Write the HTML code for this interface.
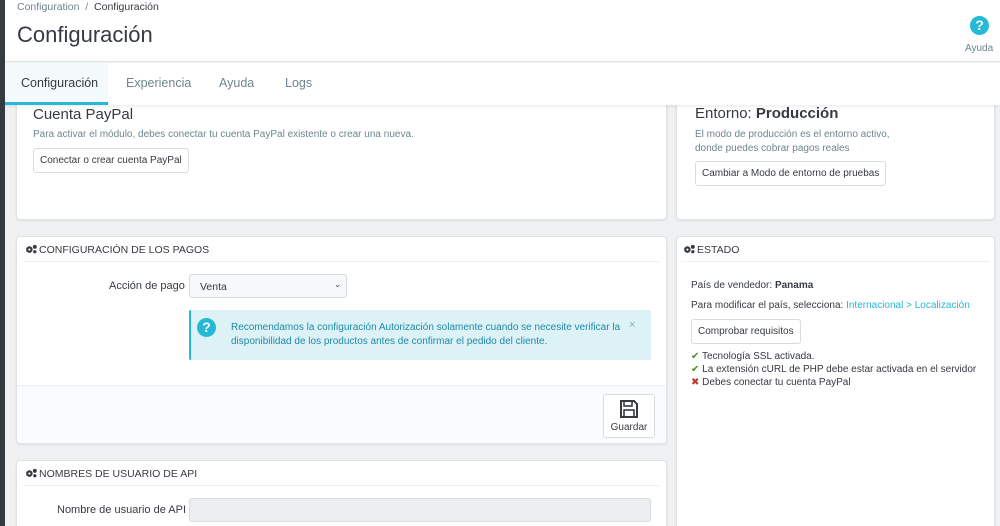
<!DOCTYPE html>
<html style="width:1000px;height:526px;overflow:hidden"><head><meta charset="utf-8"><style>
*{box-sizing:border-box;margin:0;padding:0}
body{width:1000px;height:526px;overflow:hidden;background:#eff1f2;font-family:"Liberation Sans",sans-serif;color:#363a41;position:relative;font-size:11px}
.abs{position:absolute}
.strip{left:0;top:0;width:5px;height:526px;background:#363a41;z-index:5}
.header{left:5px;top:0;width:995px;height:62px;background:#fff;border-bottom:1px solid #dfe3e6}
.tab{position:absolute;top:13px;font-size:12.5px;color:#6c868e}
.panel{background:#fff;border:1px solid #dfe3e6;border-radius:4px;box-shadow:0 1px 2px rgba(0,0,0,.08)}
.ph{position:absolute;left:6px;right:6px;top:0;height:25px;border-bottom:1px solid #eef0f1;font-family:"Liberation Sans Narrow","Liberation Sans",sans-serif;font-size:10.5px;color:#363a41;padding:7px 0 0 2px}
.btn{position:absolute;border:1px solid #d8dcdf;border-radius:3px;background:#fff;font-size:10px;color:#363a41;padding:6px 6px;white-space:nowrap}
.gear{display:inline-block;width:12px;height:10px;vertical-align:-1px;margin-right:2px}
</style></head><body>
<div class="abs strip"></div>
<div class="abs header">
 <div class="abs" style="left:12px;top:1px;font-size:10.5px;color:#6c868e">Configuration &nbsp;/&nbsp; <span style="color:#363a41">Configuración</span></div>
 <div class="abs" style="left:12px;top:22px;font-size:22px;color:#363a41">Configuración</div>
 <div class="abs" style="left:965px;top:16px;width:19px;height:19px;border-radius:50%;background:#25b9d7;color:#fff;font-weight:bold;font-size:14px;text-align:center;line-height:19px">?</div>
 <div class="abs" style="left:960px;top:43px;font-size:10px;color:#6c868e">Ayuda</div>
</div>
<!-- top left -->
<div class="abs panel" style="left:16px;top:96px;width:651px;height:124px">
 <div class="abs" style="left:16px;top:9px;font-size:15px;font-family:'Liberation Sans Narrow','Liberation Sans',sans-serif">Cuenta PayPal</div>
 <div class="abs" style="left:16px;top:32px;font-size:10px;color:#6c868e">Para activar el módulo, debes conectar tu cuenta PayPal existente o crear una nueva.</div>
 <div class="btn" style="left:16px;top:51px;height:25px">Conectar o crear cuenta PayPal</div>
</div>
<div class="abs panel" style="left:676px;top:96px;width:319px;height:124px">
 <div class="abs" style="left:18px;top:8px;font-size:15px;font-family:'Liberation Sans Narrow','Liberation Sans',sans-serif">Entorno: <b>Producción</b></div>
 <div class="abs" style="left:18px;top:31px;font-size:10px;color:#6c868e;line-height:14px">El modo de producción es el entorno activo,<br>donde puedes cobrar pagos reales</div>
 <div class="btn" style="left:18px;top:64px;height:25px">Cambiar a Modo de entorno de pruebas</div>
</div>
<div class="abs" style="left:5px;top:63px;width:995px;height:42px;background:#fff;box-shadow:0 2px 2px rgba(0,0,0,.06);z-index:3">
 <div class="abs" style="left:0;top:0;width:103px;height:42px;background:#f4f9fb;border-bottom:3px solid #25b9d7"></div>
 <div class="tab" style="left:16px;color:#363a41">Configuración</div>
 <div class="tab" style="left:121px">Experiencia</div>
 <div class="tab" style="left:214px">Ayuda</div>
 <div class="tab" style="left:280px">Logs</div>
</div>
<!-- config pagos -->
<div class="abs panel" style="left:16px;top:236px;width:651px;height:208px;overflow:hidden">
 <div class="ph"><svg class="gear" viewBox="0 0 11 9"><circle cx="4" cy="5" r="3" fill="#363a41"/><circle cx="4" cy="5" r="1" fill="#fff"/><circle cx="9" cy="2.5" r="1.8" fill="#363a41"/><circle cx="9" cy="7" r="1.5" fill="#363a41"/></svg>CONFIGURACIÓN DE LOS PAGOS</div>
 <div class="abs" style="left:92px;top:43px;font-size:11px;color:#363a41">Acción de pago</div>
 <div class="abs" style="left:172px;top:37px;width:158px;height:24px;border:1px solid #d8dcdf;border-radius:3px;background:#f7f8f9;font-size:10.5px;padding:6px 0 0 10px">Venta<span style="position:absolute;right:5px;top:5px;font-size:8px">⌄</span></div>
 <div class="abs" style="left:172px;top:73px;width:462px;height:50px;background:#dcf2f7;border-left:2px solid #25b9d7;border-radius:2px">
  <div class="abs" style="left:6px;top:8px;width:19px;height:19px;border-radius:50%;background:#25b9d7;color:#fff;font-weight:bold;font-size:14px;text-align:center;line-height:19px">?</div>
  <div class="abs" style="left:40px;top:11px;width:390px;font-size:10px;line-height:14px;color:#1f8aa4">Recomendamos la configuración Autorización solamente cuando se necesite verificar la disponibilidad de los productos antes de confirmar el pedido del cliente.</div>
  <div class="abs" style="left:438px;top:9px;color:#8ab;font-size:11px">×</div>
 </div>
 <div class="abs" style="left:0;top:148px;width:651px;height:60px;background:#fafbfc;border-top:1px solid #eef0f1">
  <div class="btn" style="left:586px;top:8px;width:52px;height:44px;padding:0;text-align:center">
   <svg width="20" height="20" viewBox="0 0 20 20" style="margin-top:4px"><path d="M2 2h13l3 3v13H2z" fill="none" stroke="#363a41" stroke-width="2"/><rect x="5" y="2" width="8" height="5" fill="none" stroke="#363a41" stroke-width="1.6"/><rect x="5" y="11" width="10" height="7" fill="none" stroke="#363a41" stroke-width="1.6"/></svg>
   <div style="font-size:10px;margin-top:0">Guardar</div></div>
 </div>
</div>
<!-- api -->
<div class="abs panel" style="left:16px;top:460px;width:651px;height:80px">
 <div class="ph"><svg class="gear" viewBox="0 0 11 9"><circle cx="4" cy="5" r="3" fill="#363a41"/><circle cx="4" cy="5" r="1" fill="#fff"/><circle cx="9" cy="2.5" r="1.8" fill="#363a41"/><circle cx="9" cy="7" r="1.5" fill="#363a41"/></svg>NOMBRES DE USUARIO DE API</div>
 <div class="abs" style="left:40px;top:43px;font-size:11px">Nombre de usuario de API</div>
 <div class="abs" style="left:172px;top:37px;width:462px;height:24px;border:1px solid #d8dcdf;border-radius:3px;background:#eceeef"></div>
</div>
<!-- estado -->
<div class="abs panel" style="left:676px;top:236px;width:319px;height:300px">
 <div class="ph" style="left:4px;right:4px"><svg class="gear" viewBox="0 0 11 9"><circle cx="4" cy="5" r="3" fill="#363a41"/><circle cx="4" cy="5" r="1" fill="#fff"/><circle cx="9" cy="2.5" r="1.8" fill="#363a41"/><circle cx="9" cy="7" r="1.5" fill="#363a41"/></svg>ESTADO</div>
 <div class="abs" style="left:14px;top:43px;font-size:10px;color:#363a41">País de vendedor: <b>Panama</b></div>
 <div class="abs" style="left:14px;top:63px;font-size:10px;color:#363a41">Para modificar el país, selecciona: <span style="color:#25b9d7">Internacional &gt; Localización</span></div>
 <div class="btn" style="left:14px;top:82px;height:25px">Comprobar requisitos</div>
 <div class="abs" style="left:14px;top:113px;font-size:10px;line-height:13px"><span style="color:#4b8f29">✔</span> Tecnología SSL activada.<br><span style="color:#4b8f29">✔</span> La extensión cURL de PHP debe estar activada en el servidor<br><span style="color:#c0392b">✖</span> Debes conectar tu cuenta PayPal</div>
</div>
</body></html>
